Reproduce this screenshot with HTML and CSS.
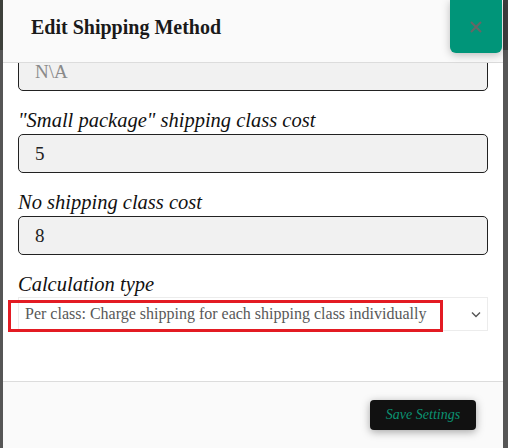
FILE: index.html
```html
<!DOCTYPE html>
<html>
<head>
<meta charset="utf-8">
<link rel="stylesheet" href="styles.css">
</head>
<body>
<div class="page">
  <div class="strip strip-left"></div>
  <div class="modal">
    <div class="modal-header">
      <h2 class="title">Edit Shipping Method</h2>
      <button class="close" aria-label="Close">
        <svg width="12" height="12" viewBox="0 0 12 12"><path d="M1 1 L11 11 M11 1 L1 11" stroke="#666" stroke-width="2" fill="none"/></svg>
      </button>
    </div>
    <div class="modal-body">
      <div class="scroll">
        <div class="field first">
          <div class="input muted">N\A</div>
        </div>
        <div class="field">
          <label class="label">"Small package" shipping class cost</label>
          <div class="input">5</div>
        </div>
        <div class="field">
          <label class="label">No shipping class cost</label>
          <div class="input">8</div>
        </div>
        <div class="field">
          <label class="label">Calculation type</label>
          <div class="select">
            <span class="select-text">Per class: Charge shipping for each shipping class individually</span>
            <svg class="chev" width="10" height="7" viewBox="0 0 10 7"><path d="M1 1.5 L5 5.5 L9 1.5" stroke="#555" stroke-width="1.4" fill="none"/></svg>
            <div class="highlight"></div>
          </div>
        </div>
      </div>
    </div>
    <div class="modal-footer">
      <button class="save">Save Settings</button>
    </div>
  </div>
  <div class="strip strip-right"></div>
</div>
</body>
</html>
```

FILE: styles.css
```css
* { box-sizing: border-box; }
html, body { margin: 0; padding: 0; }
body {
  width: 508px;
  height: 448px;
  overflow: hidden;
  font-family: "Liberation Serif", "DejaVu Serif", serif;
  background: #555;
}
.page {
  display: flex;
  height: 448px;
}
.strip {
  background: linear-gradient(#3d403b 0, #3d403b 50px, #565656 50px);
}
.strip-left { width: 3px; flex: none; }
.strip-right { width: 5px; flex: none; background: linear-gradient(#3e3e3e 0, #3e3e3e 50px, #565656 50px); }
.modal {
  width: 500px;
  flex: none;
  display: flex;
  flex-direction: column;
  background: #fff;
  position: relative;
}
.modal-header {
  height: 63px;
  flex: none;
  background: #fafafa;
  border-bottom: 1px solid #dcdcdc;
  display: flex;
  align-items: flex-start;
  position: relative;
  z-index: 2;
}
.title {
  margin: 0;
  padding: 14px 0 0 28px;
  font-size: 20px;
  font-weight: bold;
  line-height: 26px;
  color: #1a1a1a;
}
.close {
  position: absolute;
  top: 0;
  right: 1px;
  width: 52px;
  height: 53px;
  border: none;
  background: #009579;
  border-radius: 0 0 6px 6px;
  box-shadow: 0 2px 8px rgba(0,0,0,0.25);
  display: flex;
  align-items: center;
  justify-content: center;
  padding: 0;
}
.close svg { display: block; }
.modal-body {
  flex: 1;
  overflow: hidden;
  background: #fff;
}
.scroll {
  padding: 0 15px 0 15px;
  margin-top: -11px;
}
.field { display: flex; flex-direction: column; }
.field + .field { margin-top: 17px; }
.label {
  font-style: italic;
  font-size: 20.5px;
  line-height: 24px;
  color: #111;
  margin-bottom: 2px;
}
.input {
  height: 39px;
  border: 1px solid #222;
  border-radius: 5px;
  background: #f1f1f1;
  font-size: 19px;
  line-height: 37px;
  padding-left: 16px;
  color: #222;
}
.input.muted { color: #8a8a8a; }
.select {
  position: relative;
  height: 34px;
  border: 1px solid #ececec;
  background: #fff;
  display: flex;
  align-items: center;
  padding-left: 6px;
  margin-top: -1px;
}
.select-text {
  font-size: 16px;
  color: #585858;
  flex: 1;
}
.chev { margin-right: 6px; }
.highlight {
  position: absolute;
  left: -11px;
  top: 2px;
  width: 435px;
  height: 32px;
  border: 3px solid #e31b23;
}
.modal-footer {
  height: 67px;
  flex: none;
  background: #fafafa;
  border-top: 1px solid #dcdcdc;
  display: flex;
  justify-content: flex-end;
  align-items: flex-start;
  padding: 18px 27px 0 0;
}
.save {
  width: 106px;
  height: 30px;
  border: none;
  border-radius: 4px;
  background: #111;
  color: #0b9373;
  font-family: "Liberation Serif", serif;
  font-style: italic;
  font-size: 14px;
  box-shadow: 0 2px 8px rgba(0,0,0,0.35);
  padding: 0;
}
```
